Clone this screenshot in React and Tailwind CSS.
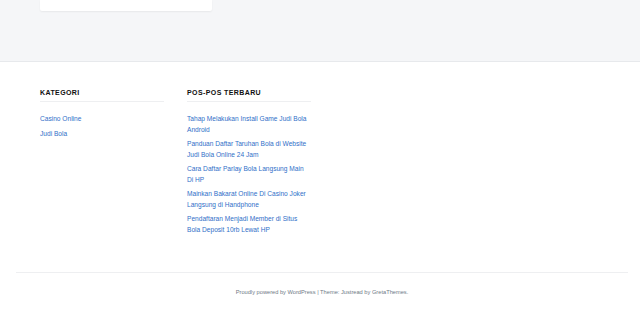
export default function App() {
  const cats = ["Casino Online", "Judi Bola"];
  const posts = [
    "Tahap Melakukan Install Game Judi Bola Android",
    "Panduan Daftar Taruhan Bola di Website Judi Bola Online 24 Jam",
    "Cara Daftar Parlay Bola Langsung Main Di HP",
    "Mainkan Bakarat Online Di Casino Joker Langsung di Handphone",
    "Pendaftaran Menjadi Member di Situs Bola Deposit 10rb Lewat HP",
  ];

  return (
    <div className="w-[640px] h-[311px] bg-white font-['Liberation_Sans',Arial,sans-serif] overflow-hidden">
      {/* end of content area */}
      <div className="h-[62px] bg-[#f5f6f8] border-b border-[#e7e9ec] px-10">
        <div className="w-[172px] h-[11px] bg-white rounded-b-[2px] shadow-[0_1px_2px_rgba(0,0,0,0.06)]" />
      </div>

      {/* footer widgets */}
      <div className="flex gap-[23px] px-10 pt-[26px] h-[210px]">
        <Widget title="Kategori" items={cats} />
        <Widget title="Pos-Pos Terbaru" items={posts} />
      </div>

      {/* site info */}
      <div className="ml-4 mr-3 border-t border-[#eeeff1] pt-[15px] text-center text-[5.7px] text-[#6f7a86]">
        Proudly powered by WordPress | Theme: Justread by GretaThemes.
      </div>
    </div>
  );
}

function Widget({ title, items }) {
  return (
    <section className="w-[124px]">
      <h3 className="text-[7px] leading-[9px] font-bold uppercase tracking-[0.4px] text-[#111] pb-[4px] border-b border-[#eeeff1]">
        {title}
      </h3>
      <ul className="mt-[12px] flex flex-col gap-[4px]">
        {items.map((t) => (
          <li key={t} className="text-[6.6px] leading-[10.5px] text-[#2f6fc8]">{t}</li>
        ))}
      </ul>
    </section>
  );
}
